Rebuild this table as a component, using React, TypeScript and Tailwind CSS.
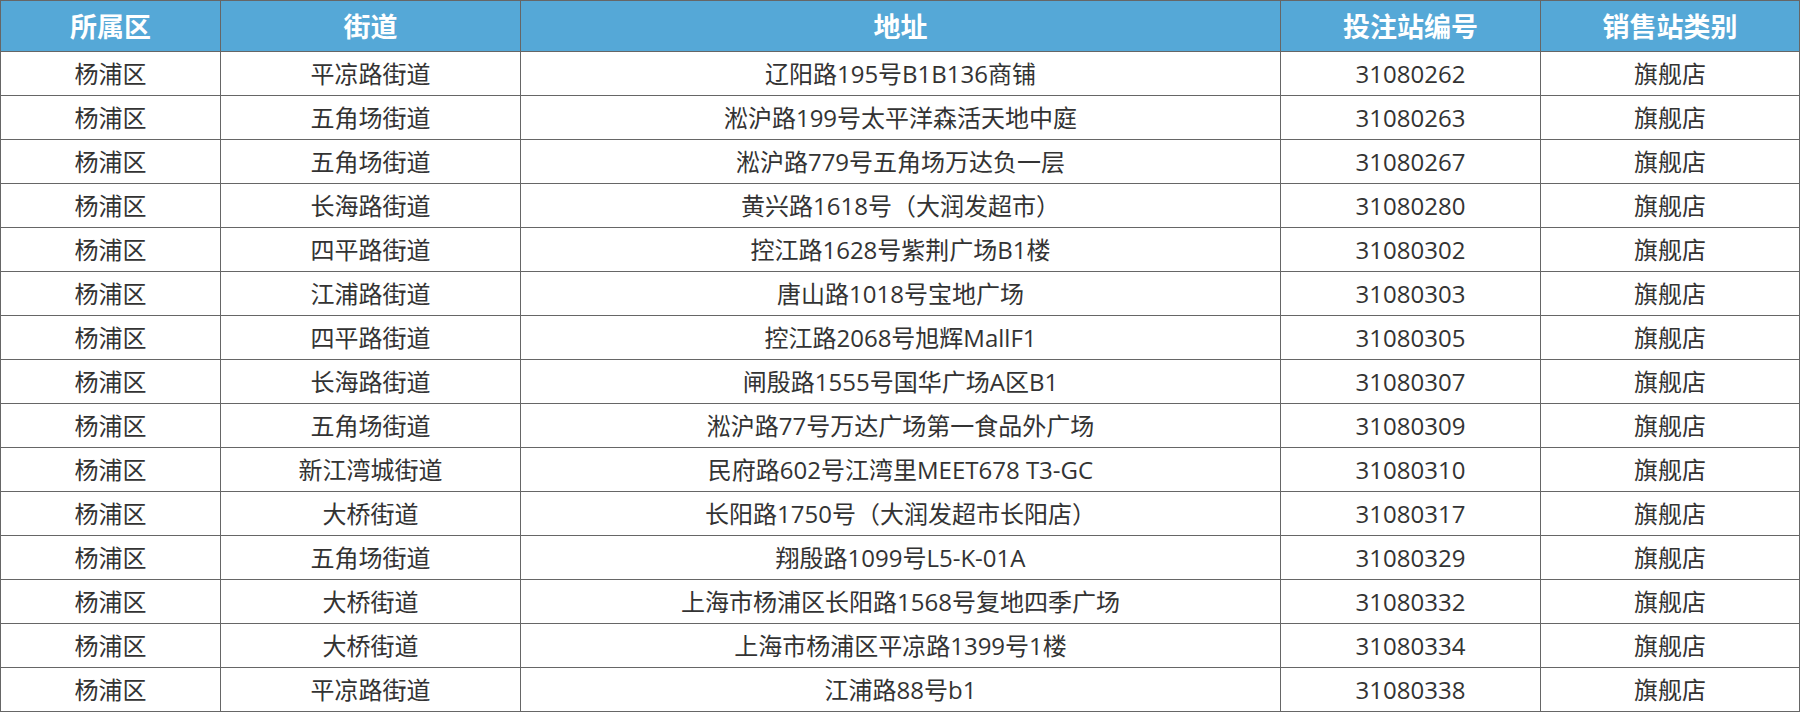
import React from 'react'

const rows = [
  ['杨浦区', '平凉路街道', '辽阳路195号B1B136商铺', '31080262', '旗舰店'],
  ['杨浦区', '五角场街道', '淞沪路199号太平洋森活天地中庭', '31080263', '旗舰店'],
  ['杨浦区', '五角场街道', '淞沪路779号五角场万达负一层', '31080267', '旗舰店'],
  ['杨浦区', '长海路街道', '黄兴路1618号（大润发超市）', '31080280', '旗舰店'],
  ['杨浦区', '四平路街道', '控江路1628号紫荆广场B1楼', '31080302', '旗舰店'],
  ['杨浦区', '江浦路街道', '唐山路1018号宝地广场', '31080303', '旗舰店'],
  ['杨浦区', '四平路街道', '控江路2068号旭辉MallF1', '31080305', '旗舰店'],
  ['杨浦区', '长海路街道', '闸殷路1555号国华广场A区B1', '31080307', '旗舰店'],
  ['杨浦区', '五角场街道', '淞沪路77号万达广场第一食品外广场', '31080309', '旗舰店'],
  ['杨浦区', '新江湾城街道', '民府路602号江湾里MEET678 T3-GC', '31080310', '旗舰店'],
  ['杨浦区', '大桥街道', '长阳路1750号（大润发超市长阳店）', '31080317', '旗舰店'],
  ['杨浦区', '五角场街道', '翔殷路1099号L5-K-01A', '31080329', '旗舰店'],
  ['杨浦区', '大桥街道', '上海市杨浦区长阳路1568号复地四季广场', '31080332', '旗舰店'],
  ['杨浦区', '大桥街道', '上海市杨浦区平凉路1399号1楼', '31080334', '旗舰店'],
  ['杨浦区', '平凉路街道', '江浦路88号b1', '31080338', '旗舰店'],
]

const heads = ['所属区', '街道', '地址', '投注站编号', '销售站类别']

function App() {
  return (
    <div className="w-[1800px] h-[712px] bg-white font-['Open_Sans','Noto_Sans_CJK_SC',sans-serif]">
      <div className="grid grid-cols-[220px_300px_760px_260px_259px] border-l border-t border-[#666]">
        {heads.map((h) => (
          <div
            key={h}
            className="h-[51px] flex items-center justify-center bg-[#55a8d7] text-white font-bold text-[27px] font-['Noto_Sans_CJK_SC',sans-serif] border-r border-b border-[#666]"
          >
            {h}
          </div>
        ))}
        {rows.map((r, i) =>
          r.map((c, j) => (
            <div
              key={i + '-' + j}
              className="h-[44px] flex items-center justify-center text-[#333] text-[24px] border-r border-b border-[#666] whitespace-nowrap"
            >
              {c}
            </div>
          ))
        )}
      </div>
    </div>
  )
}

export default App
